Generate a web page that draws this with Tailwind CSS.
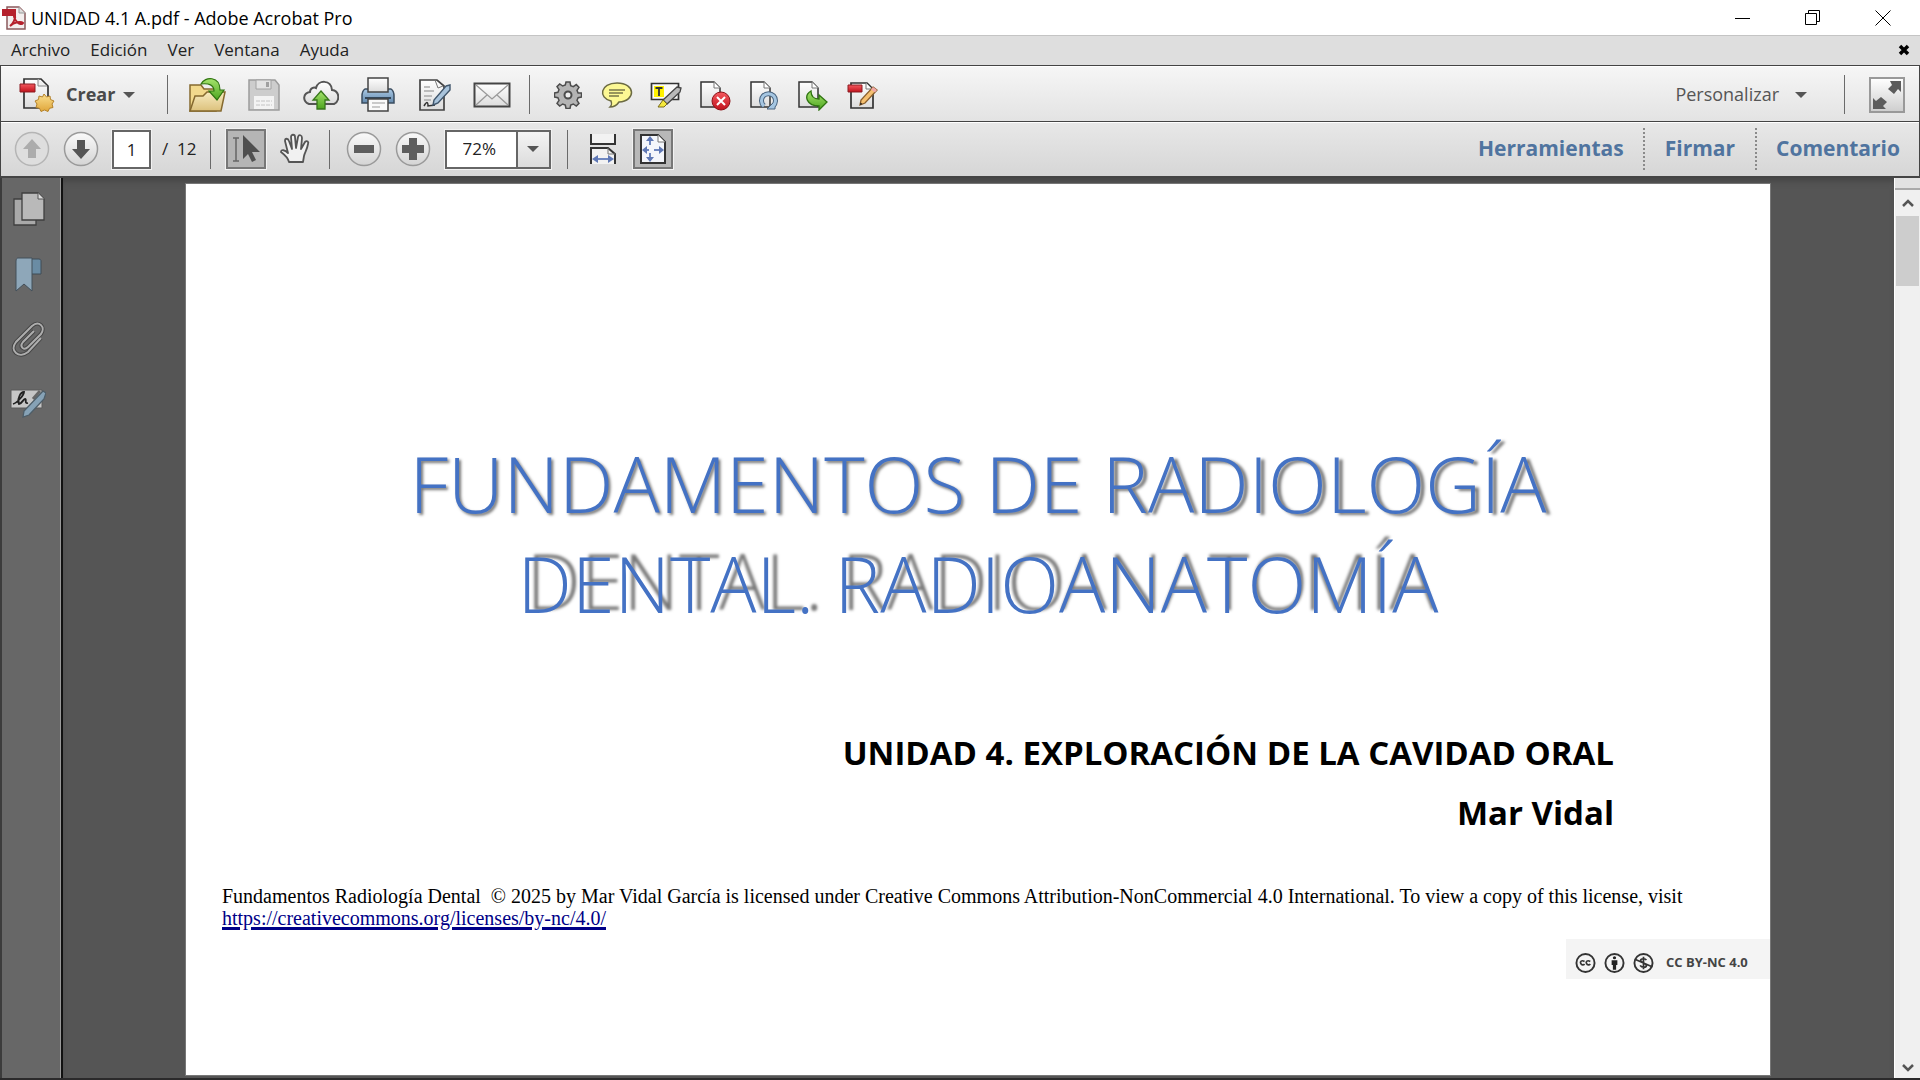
<!DOCTYPE html>
<html lang="es">
<head>
<meta charset="utf-8">
<title>UNIDAD 4.1 A.pdf - Adobe Acrobat Pro</title>
<script src="https://cdn.jsdelivr.net/npm/@tailwindcss/browser@4"></script>
</head>
<body class="flex h-screen flex-col overflow-hidden bg-[#2b2a2b] font-['Open_Sans','Noto_Sans',sans-serif] text-[17px] text-[#222]">

<svg class="absolute size-0" aria-hidden="true">
  <defs>
    <linearGradient id="paper" x1="0" y1="0" x2="0" y2="1"><stop offset="0" stop-color="#fff"/><stop offset="1" stop-color="#dcdcdc"/></linearGradient>
    <linearGradient id="round" x1="0" y1="0" x2="0" y2="1"><stop offset="0" stop-color="#fafafa"/><stop offset="1" stop-color="#d4d4d4"/></linearGradient>
    <linearGradient id="green" x1="0" y1="0" x2="0" y2="1"><stop offset="0" stop-color="#a5e46c"/><stop offset="1" stop-color="#4da51f"/></linearGradient>
    <linearGradient id="red" x1="0" y1="0" x2="0" y2="1"><stop offset="0" stop-color="#f4595f"/><stop offset="1" stop-color="#c1121c"/></linearGradient>
    <linearGradient id="folder" x1="0" y1="0" x2="0" y2="1"><stop offset="0" stop-color="#f7ebc0"/><stop offset="1" stop-color="#dcc17c"/></linearGradient>
    <linearGradient id="blue" x1="0" y1="0" x2="0" y2="1"><stop offset="0" stop-color="#a9c8e4"/><stop offset="1" stop-color="#6489ad"/></linearGradient>
    <linearGradient id="gold" x1="0" y1="0" x2="0" y2="1"><stop offset="0" stop-color="#fbe08f"/><stop offset="1" stop-color="#e0a63a"/></linearGradient>
  </defs>
</svg>

<!-- Title bar -->
<header class="flex h-[35px] shrink-0 items-center bg-white text-[18px] text-black">
  <svg class="ml-0.5 h-6 w-6" viewBox="0 0 24 24">
    <path d="M5 1h12l6 6v16H5z" fill="#f3eeee" stroke="#8a5a5c" stroke-width="1.5"/>
    <path d="M17 1v6h6" fill="#ddd" stroke="#999"/>
    <path d="M0 3h14v7H0z" fill="#b5202c"/>
    <path d="M8 20c3-2 6-8 5-11-2-1-1 4 2 7 2 2 5 3 6 1-2-2-9-1-13 3z" fill="none" stroke="#b5202c" stroke-width="2"/>
  </svg>
  <h1 class="ml-[5px] pt-0.5">UNIDAD 4.1 A.pdf - Adobe Acrobat Pro</h1>
  <div class="ml-auto flex h-full items-center gap-[54px] pr-[29px]">
    <button aria-label="Minimizar"><svg class="size-4" viewBox="0 0 16 16"><path d="M0 8.500h15" stroke="#000"/></svg></button>
    <button aria-label="Restaurar"><svg class="size-4" viewBox="0 0 16 16" fill="none" stroke="#000"><path d="M.5 3.500h11v11H.5zM3.500 3.500v-3h11v11h-3"/></svg></button>
    <button aria-label="Cerrar"><svg class="size-4" viewBox="0 0 16 16"><path d="M.5.5l15 15M15.500.5l-15 15" stroke="#000"/></svg></button>
  </div>
</header>

<!-- Menu bar -->
<nav class="flex h-[31px] shrink-0 items-center gap-5 border-b border-[#444] bg-[#dedede] pl-[11px] pr-[10px] shadow-[inset_0_1px_0_#c4c4c4]">
  <button>Archivo</button><button>Edición</button><button>Ver</button><button>Ventana</button><button>Ayuda</button>
  <button class="ml-auto" aria-label="Cerrar documento"><svg class="size-3" viewBox="0 0 12 12"><path d="M2 2l8 8M10 2l-8 8" stroke="#000" stroke-width="3.500"/></svg></button>
</nav>

<!-- Main toolbar -->
<div class="flex h-[56px] shrink-0 items-center border-b border-l border-r border-[#444] bg-linear-to-b from-[#f6f6f6] to-[#e3e3e3] pt-0.5 shadow-[inset_0_1px_0_#fff]">
  <button class="ml-[18px] flex items-center">
    <svg class="h-9 w-9" viewBox="0 0 36 36">
      <path d="M5 2h17l7 7v22H5z" fill="url(#paper)" stroke="#333" stroke-width="1.700"/>
      <path d="M19 2v7h9" fill="#f0f0f0" stroke="#888"/>
      <path d="M1 7h15v8H1z" fill="url(#red)" stroke="#8c1c22"/>
      <path d="M25 17l2.500 3 3.500-1 .5 3.500 3.500 1.500-2 3 1 3.500-3.500.8-1.500 3.200-3.500-1.500-3.500 1.500-1.500-3.200-3.500-.8 1-3.500-2-3 3.500-1.500.5-3.500 3.500 1z" fill="url(#gold)" stroke="#b4822a"/>
    </svg>
    <span class="ml-[11px] text-[18px] font-bold text-[#4a4a4a]">Crear</span>
    <svg class="ml-2 h-2 w-3" viewBox="0 0 12 8"><path d="M0 1h12L6 7z" fill="#555"/></svg>
  </button>
  <span class="ml-[32px] h-[39px] w-px bg-[#6a6a6a]"></span>
  <div class="ml-[10px] flex items-center">
    <button class="flex w-[57px] justify-center" aria-label="Abrir"><svg class="h-[38px] w-[38px]" viewBox="0 0 38 38">
      <path d="M2 9h11l3 4h12v22H2z" fill="#f2d98c" stroke="#85692f" stroke-width="1.500"/>
      <path d="M7 20h8l4-4h18l-4 19H2z" fill="url(#folder)" stroke="#85692f" stroke-width="1.500"/>
      <path d="M13 8C17 0 32 0 32 14h4l-7 10-8-9h5c0-6-5-8-13-7z" fill="url(#green)" stroke="#2f7410" stroke-width="1.200"/></svg></button>
    <button class="flex w-[57px] justify-center" aria-label="Guardar" disabled><svg class="h-8 w-8" viewBox="0 0 32 32">
      <path d="M1 1h26l4 5v25H1z" fill="#cdcdcd" stroke="#9c9c9c" stroke-width="1.500"/>
      <path d="M8 1h15v9H8z" fill="#e3e3e3" stroke="#a2a2a2"/><path d="M18 3h3v5h-3z" fill="#a0a0a0"/>
      <path d="M6 17h20v13H6z" fill="#f3f3f3"/><path d="M8 22h16M8 26h16" stroke="#c4c4c4" stroke-dasharray="4 1"/></svg></button>
    <button class="flex w-[57px] justify-center" aria-label="Subir a la nube"><svg class="h-8 w-9" viewBox="0 0 36 32">
      <path d="M6 25C-1 22 0 14 7 13 7 9 11 8 13 9 15 1 28 0 29 11c8 1 8 11 2 14z" fill="url(#paper)" stroke="#555" stroke-width="2"/>
      <path d="M18 12l8 9h-4v9h-8v-9h-4z" fill="url(#green)" stroke="#37751b" stroke-width="1.300"/></svg></button>
    <button class="flex w-[57px] justify-center" aria-label="Imprimir"><svg class="h-9 w-9" viewBox="0 0 36 36">
      <path d="M5 12h26c3 2 3 4 3 7v7H2v-7c0-3 0-5 3-7z" fill="url(#blue)" stroke="#3b4d60" stroke-width="1.500"/>
      <path d="M8 1h20v14H8z" fill="url(#paper)" stroke="#444" stroke-width="1.500"/>
      <path d="M5 21h26" stroke="#33475a" stroke-width="2"/>
      <path d="M8 22h20v12H8z" fill="#fafafa" stroke="#444" stroke-width="1.500"/><path d="M12 26h13M12 30h8" stroke="#999"/></svg></button>
    <button class="flex w-[57px] justify-center" aria-label="Editar texto"><svg class="h-8 w-8" viewBox="0 0 32 32">
      <path d="M1 1h17l7 6v24H1z" fill="url(#paper)" stroke="#444" stroke-width="1.700"/><path d="M16 1l3 8 5-2" fill="none" stroke="#777"/>
      <path d="M5 8h6M5 12h10M5 17h8M5 21h7" stroke="#aaa" stroke-width="1.500"/><path d="M5 27c3-5 4-4 4 0l7-1" fill="none" stroke="#333" stroke-width="1.500"/>
      <path d="M27 7l4-1v5L19 24l-5 2 1-5z" fill="#a9c4dc" stroke="#3f556b" stroke-width="1.400"/></svg></button>
    <button class="flex w-[57px] justify-center" aria-label="Enviar por correo"><svg class="h-[26px] w-[38px]" viewBox="0 0 38 26">
      <path d="M1.500 1.500h35v23h-35z" fill="url(#paper)" stroke="#444" stroke-width="2"/>
      <path d="M3 3l16 14L35 3M3 23l11-10M35 23L24 13" fill="none" stroke="#999" stroke-width="1.300"/></svg></button>
  </div>
  <span class="ml-[9px] h-[39px] w-px bg-[#6a6a6a]"></span>
  <div class="ml-[13px] flex items-center">
    <button class="flex w-[49px] justify-center" aria-label="Configuración"><svg class="size-7" viewBox="0 0 28 28">
      <path d="M12 1h4l.7 3.600 2.600 1.100 3-2.100 2.700 2.700-2 3.100 1.100 2.600L27.500 12v4l-3.400.7-1.100 2.600 2 3-2.700 2.800-3-2.100-2.600 1.100L16 27.500h-4l-.7-3.400L8.700 23l-3 2L3 22.300l2-3-1.100-2.600L.5 16v-4l3.400-.7L5 8.700 3 5.700 5.700 3l3 2 2.600-1.100z" fill="#b4b4b4" stroke="#4c4c4c" stroke-width="1.500"/>
      <circle cx="14" cy="14" r="3.500" fill="#eee" stroke="#4c4c4c" stroke-width="2"/></svg></button>
    <button class="flex w-[49px] justify-center" aria-label="Comentario"><svg class="h-7 w-8" viewBox="0 0 32 28">
      <path d="M16 2c19 0 19 18 2 19-2 3-5 5-9 5 2-2 2-3 1-6C-3 17-1 2 16 2z" fill="#fcf894" stroke="#6b6a42" stroke-width="1.500"/>
      <path d="M8 9h16M8 12h14M8 15h10" stroke="#77754a" stroke-width="1.300"/></svg></button>
    <button class="flex w-[49px] justify-center" aria-label="Resaltar texto"><svg class="h-7 w-8" viewBox="0 0 32 28">
      <path d="M1.500 2.500h27v16h-27z" fill="#fafafa" stroke="#333" stroke-width="1.700"/>
      <path d="M4 5h10v11H4z" fill="#fff200"/><path d="M5.500 7h7M9 7v8" stroke="#333" stroke-width="1.800"/>
      <path d="M27 6l4 1-1 4-13 12-4-4z" fill="#b9b9b9" stroke="#444" stroke-width="1.300"/><path d="M13 19l4 4-3 3H8z" fill="#f4e83c" stroke="#7a6c1e"/></svg></button>
    <button class="flex w-[49px] justify-center" aria-label="Eliminar página"><svg class="h-8 w-8" viewBox="0 0 32 32">
      <path d="M2 3h13l6 6v19H2z" fill="url(#paper)" stroke="#333" stroke-width="1.500"/><path d="M15 3v6h6" fill="#fff" stroke="#777"/>
      <circle cx="22" cy="22" r="9" fill="url(#red)" stroke="#8d1016"/><path d="M18 18l8 8M26 18l-8 8" stroke="#fff" stroke-width="2"/></svg></button>
    <button class="flex w-[49px] justify-center" aria-label="Girar página"><svg class="h-8 w-8" viewBox="0 0 32 32">
      <path d="M3 3h13l6 6v19H3z" fill="url(#paper)" stroke="#333" stroke-width="1.500"/><path d="M16 3v6h6" fill="#fff" stroke="#777"/>
      <path d="M16 27a7 7 0 1 1 9 0" fill="none" stroke="#4a6580" stroke-width="5"/><path d="M27 22v8h-8z" fill="#a5c6e2" stroke="#4a6580"/><path d="M16 27a7 7 0 1 1 9 0" fill="none" stroke="#a5c6e2" stroke-width="3"/></svg></button>
    <button class="flex w-[49px] justify-center" aria-label="Extraer página"><svg class="h-8 w-8" viewBox="0 0 32 32">
      <path d="M2 3h13l6 6v19H2z" fill="url(#paper)" stroke="#333" stroke-width="1.500"/><path d="M15 3v6h6" fill="#fff" stroke="#777"/>
      <path d="M14 12c-8 5-4 15 8 15v4l8-8-8-7v4c-5 0-8-2-8-8z" fill="url(#green)" stroke="#2f7410" stroke-width="1.300"/></svg></button>
    <button class="flex w-[49px] justify-center" aria-label="Editar PDF"><svg class="h-8 w-8" viewBox="0 0 32 32">
      <path d="M5 4h16l6 6v19H5z" fill="url(#paper)" stroke="#333" stroke-width="1.700"/><path d="M2 6h14v7H2z" fill="url(#red)" stroke="#8c1c22"/>
      <path d="M20 4v6h6" fill="#fff" stroke="#777"/><path d="M27 8l4 3-12 13-5 2 1-5z" fill="#f5c070" stroke="#8a5f2d" stroke-width="1.300"/><path d="M27 8l4 3-2 2.500-4-3z" fill="#f0a8a8"/><path d="M14 26l.5-2.500 2 1.500z" fill="#222"/></svg></button>
  </div>
  <button class="ml-auto flex items-center gap-4 text-[18px] text-[#555]">Personalizar<svg class="h-2 w-3" viewBox="0 0 12 8"><path d="M0 1h12L6 7z" fill="#555"/></svg></button>
  <span class="ml-[37px] h-[39px] w-px bg-[#6a6a6a]"></span>
  <button class="ml-[24px] mr-[14px] flex size-9 items-center justify-center border-2 border-[#999] bg-linear-to-b from-[#fefefe] to-[#cfcfcf]" aria-label="Modo de lectura">
    <svg class="size-7" viewBox="0 0 28 28"><path d="M17 0h11v11l-3-3-4 5-6-5 4-4zM0 28V17l3 3 5-4 6 5-4 4 3 3z" fill="#5c5c5c"/></svg></button>
</div>

<!-- Navigation toolbar -->
<div class="flex h-[56px] shrink-0 items-center border-b-2 border-l border-r border-[#444] bg-linear-to-b from-[#e8e8e8] to-[#d6d6d6] shadow-[inset_0_1px_0_#fff]">
  <button class="ml-[13px]" aria-label="Página anterior" disabled><svg class="size-9" viewBox="0 0 36 36"><circle cx="18" cy="18" r="16.500" fill="#dedede" stroke="#b5b5b5" stroke-width="1.500"/><path d="M18 8l9 10h-5v9h-8v-9H9z" fill="#acacac"/></svg></button>
  <button class="ml-[13px]" aria-label="Página siguiente"><svg class="size-9" viewBox="0 0 36 36"><circle cx="18" cy="18" r="16.500" fill="url(#round)" stroke="#9a9a9a" stroke-width="1.500"/><path d="M18 28l9-10h-5V9h-8v9H9z" fill="#555"/></svg></button>
  <input class="ml-[13px] h-[39px] w-[39px] border-2 border-[#666] bg-white text-center outline outline-[#f2f2f2]" value="1" aria-label="Página">
  <span class="ml-[11px] whitespace-pre">/  12</span>
  <span class="ml-[13px] h-[39px] w-px bg-[#6a6a6a]"></span>
  <button class="ml-[15px] flex size-10 items-center justify-center border-2 border-[#777] bg-[#b5b5b5] outline outline-[#f2f2f2]" aria-label="Seleccionar"><svg class="h-[30px] w-[30px]" viewBox="0 0 30 30"><path d="M2 4h6M2 27h6M5 4v23" stroke="#666" stroke-width="1.500"/><path d="M12 1l17 17h-8l4 8-4 2-4-8-5 5z" fill="#4f4f4f"/></svg></button>
  <button class="ml-[13px]" aria-label="Mano"><svg class="h-8 w-[32px]" viewBox="0 0 32 32"><path d="M10 29c-1-4-4-7-8-10 0-3 4-2 7 1L6 8c0-3 3-3 4 0l3 8-1-12c0-3 4-3 4 0l1 11 2-11c1-3 4-2 4 1l-1 11 4-7c2-2 4 0 3 2-1 6-3 8-4 12l-1 6z" fill="#f1f1f1" stroke="#555" stroke-width="1.800" stroke-linejoin="round"/></svg></button>
  <span class="ml-[18px] h-[39px] w-px bg-[#6a6a6a]"></span>
  <button class="ml-[16px]" aria-label="Reducir"><svg class="size-9" viewBox="0 0 36 36"><circle cx="18" cy="18" r="16.500" fill="url(#round)" stroke="#9a9a9a" stroke-width="1.500"/><path d="M8 14h20v8H8z" fill="#5e5e5e"/></svg></button>
  <button class="ml-[13px]" aria-label="Ampliar"><svg class="size-9" viewBox="0 0 36 36"><circle cx="18" cy="18" r="16.500" fill="url(#round)" stroke="#9a9a9a" stroke-width="1.500"/><path d="M14 7h8v7h7v8h-7v7h-8v-7H7v-8h7z" fill="#5e5e5e"/></svg></button>
  <div class="relative ml-[14px]">
    <select class="h-[39px] w-[106px] appearance-none border-2 border-[#666] bg-white pl-[16px] outline outline-[#f2f2f2]" aria-label="Zoom"><option>72%</option><option>100%</option></select>
    <span class="pointer-events-none absolute inset-y-0.5 right-0.5 flex w-[33px] items-center justify-center border-l-2 border-[#666] bg-linear-to-b from-[#f4f4f4] to-[#dcdcdc]"><svg class="h-2 w-3" viewBox="0 0 12 8"><path d="M0 1h12L6 7z" fill="#555"/></svg></span>
  </div>
  <span class="ml-[16px] h-[39px] w-px bg-[#6a6a6a]"></span>
  <button class="ml-[22px]" aria-label="Desplazamiento"><svg class="h-[30px] w-[26px]" viewBox="0 0 26 30"><path d="M1 0v10h24V0" fill="#f2f2f2" stroke="#333" stroke-width="2"/><path d="M1 30V14h17l7 6v10" fill="#f2f2f2" stroke="#333" stroke-width="2"/><path d="M18 14v6h7" fill="none" stroke="#777"/><path d="M4 25h18" stroke="#6f87c0" stroke-width="2"/><path d="M2 25l6-4v8zM24 25l-6-4v8z" fill="#5f78b5"/></svg></button>
  <button class="ml-[17px] flex size-10 items-center justify-center border-2 border-[#777] bg-[#b8b8b8] outline outline-[#f2f2f2]" aria-label="Ajustar página"><svg class="h-[30px] w-[26px]" viewBox="0 0 26 30"><path d="M1 1h17l7 7v21H1z" fill="#f4f6fb" stroke="#333" stroke-width="2"/><path d="M18 1v7h7" fill="#fff" stroke="#777"/><path d="M10 5v6M10 19v6M5 16h4M14 16h7" stroke="#6f87c0" stroke-width="2"/><path d="M10 2l4 5H6zM10 28l4-5H6zM2 16l5-4v8zM24 16l-5-4v8z" fill="#5f78b5"/></svg></button>
  <div class="ml-auto flex items-center text-[21px] font-bold text-[#50749f]">
    <button class="px-[19px]">Herramientas</button>
    <button class="h-[42px] border-l-2 border-dotted border-[#8a8a8a] px-5">Firmar</button>
    <button class="h-[42px] border-l-2 border-dotted border-[#8a8a8a] px-[19px]">Comentario</button>
  </div>
</div>

<!-- Work area -->
<main class="mb-0.5 flex min-h-0 flex-1">
  <aside class="flex w-[63px] shrink-0 flex-col items-center gap-[29px] border-l-2 border-r-2 border-l-[#3c3c3c] border-r-[#111] bg-[#676767] pr-2 pt-[13px] shadow-[inset_-1px_0_0_#999]">
    <button aria-label="Miniaturas"><svg class="size-9" viewBox="0 0 36 36"><path d="M4 8h22v26H4z" fill="#a9a9a9" stroke="#3f3f3f" stroke-width="1.300"/><path d="M12 2h16l6 6v21H12z" fill="#b9b9b9" stroke="#3f3f3f" stroke-width="1.300"/><path d="M28 2v6h6" fill="#ddd" stroke="#555"/></svg></button>
    <button aria-label="Marcadores"><svg class="size-9" viewBox="0 0 36 36"><path d="M20 3h9c2 0 2 2 2 2v13H21z" fill="#6a8ca4" stroke="#3f4c57"/><path d="M8 2h14v33l-8-7-8 7V5c0-2 1-3 2-3z" fill="#8ea7b9" stroke="#43505b"/></svg></button>
    <button aria-label="Archivos adjuntos"><svg class="size-9" viewBox="0 0 36 36" fill="none"><path d="M31 17L18 31C9 38-1 30 6 21L22 5c7-6 14 1 9 8L18 26c-4 4-9 0-5-5L24 10" stroke="#444" stroke-width="4"/><path d="M31 17L18 31C9 38-1 30 6 21L22 5c7-6 14 1 9 8L18 26c-4 4-9 0-5-5L24 10" stroke="#adadad" stroke-width="2"/></svg></button>
    <button aria-label="Firmas"><svg class="size-9" viewBox="0 0 36 36"><path d="M1 4h31v18H1z" fill="#c6c6c6" stroke="#5a5a5a"/><path d="M3 18c4-1 11-9 11-12-4 0-7 8-5 12 3 0 4-5 6-5s-1 5 3 4" fill="none" stroke="#222" stroke-width="1.800"/><path d="M23 13l7-8" stroke="#666" stroke-width="3"/><path d="M33 5l3 2-2 6-15 16-6 2 1-6z" fill="#86a2b6" stroke="#4d5d68" stroke-width="1.300"/></svg></button>
  </aside>

  <section class="flex min-w-0 flex-1 bg-[#555] pb-[3px] pl-[123px] pr-[124px] pt-[6px] shadow-[inset_0_6px_6px_-3px_#444]">
    <article class="flex min-w-0 flex-1 flex-col bg-white text-black shadow-[0_0_0_1px_#777]">
      <h2 class="mt-[250px] text-center text-[77px] font-[350] leading-[100px] text-[#4472c4]">
        <span class="[text-shadow:2px_2px_3px_#777]">FUNDAMENTOS DE</span> <span class="[text-shadow:4px_2px_3px_#777]">RADIOLOGÍA</span><br>
        <span class="[text-shadow:9px_-3px_3px_#777]">DENTAL.</span> <span class="[text-shadow:7px_-3px_3px_#777]">RADIO</span><span class="[text-shadow:2px_-3px_3px_#777]">ANATO</span><span class="[text-shadow:-3px_-3px_3px_#777]">MÍA</span>
      </h2>
      <div class="mt-[89px] pr-[156px] text-right text-[33px] font-bold leading-[60px]">
        <p>UNIDAD 4. EXPLORACIÓN DE LA CAVIDAD ORAL</p>
        <p>Mar Vidal</p>
      </div>
      <p class="mt-[42px] whitespace-pre-line pl-[36px] font-['Liberation_Serif',serif] text-[20px] leading-[22px]">Fundamentos Radiología Dental &nbsp;© 2025 by Mar Vidal García is licensed under Creative Commons Attribution-NonCommercial 4.0 International. To view a copy of this license, visit
        <a class="text-[#000087] underline decoration-3 underline-offset-2" href="https://creativecommons.org/licenses/by-nc/4.0/">https://creativecommons.org/licenses/by-nc/4.0/</a></p>
      <div class="mt-[10px] flex h-10 w-[204px] items-center gap-2 self-end bg-[#f4f4f4] pl-[9px] pt-2 text-[13px] font-bold text-[#444]">
        <svg class="h-[22px] w-[21px]" viewBox="0 0 22 22" fill="none" stroke="#333"><circle cx="11" cy="11" r="9.500" stroke-width="2"/><path d="M10 9.500c-3-2-5 0-4 2s3 2 4 .5M16 9.500c-3-2-5 0-4 2s3 2 4 .5" stroke-width="1.800"/></svg>
        <svg class="h-[22px] w-[21px]" viewBox="0 0 22 22"><circle cx="11" cy="11" r="9.500" stroke-width="2" fill="none" stroke="#333"/><circle cx="11" cy="5.500" r="1.700" fill="#222"/><path d="M8 8h6v5h-1.300v5H9.300v-5H8z" fill="#222"/></svg>
        <svg class="h-[22px] w-[21px]" viewBox="0 0 22 22" fill="none" stroke="#333"><circle cx="11" cy="11" r="9.500" stroke-width="2"/><path d="M2 7l18 8M14 8c-1-2-6-2-6 .5s6 2.500 6 5-5 2.500-6.500 0M11 4.500v13" stroke-width="1.800"/></svg>
        <span class="ml-1">CC BY-NC 4.0</span>
      </div>
    </article>
  </section>

  <div class="flex w-[26px] shrink-0 flex-col items-center border-l border-white bg-[#f0f0f0]">
    <span class="h-[12px] w-full shrink-0 border-b-2 border-[#aaa] bg-[#e2e2e2]"></span>
    <button class="flex h-[26px] w-full shrink-0 items-center justify-center" aria-label="Subir"><svg class="size-3" viewBox="0 0 12 12"><path d="M1 9l5-5 5 5" fill="none" stroke="#555" stroke-width="2.500"/></svg></button>
    <span class="h-[70px] w-[23px] shrink-0 bg-[#cdcdcd]"></span>
    <button class="mt-auto flex h-5 w-full items-center justify-center" aria-label="Bajar"><svg class="size-3" viewBox="0 0 12 12"><path d="M1 3l5 5 5-5" fill="none" stroke="#555" stroke-width="2.500"/></svg></button>
  </div>
</main>
</body>
</html>
